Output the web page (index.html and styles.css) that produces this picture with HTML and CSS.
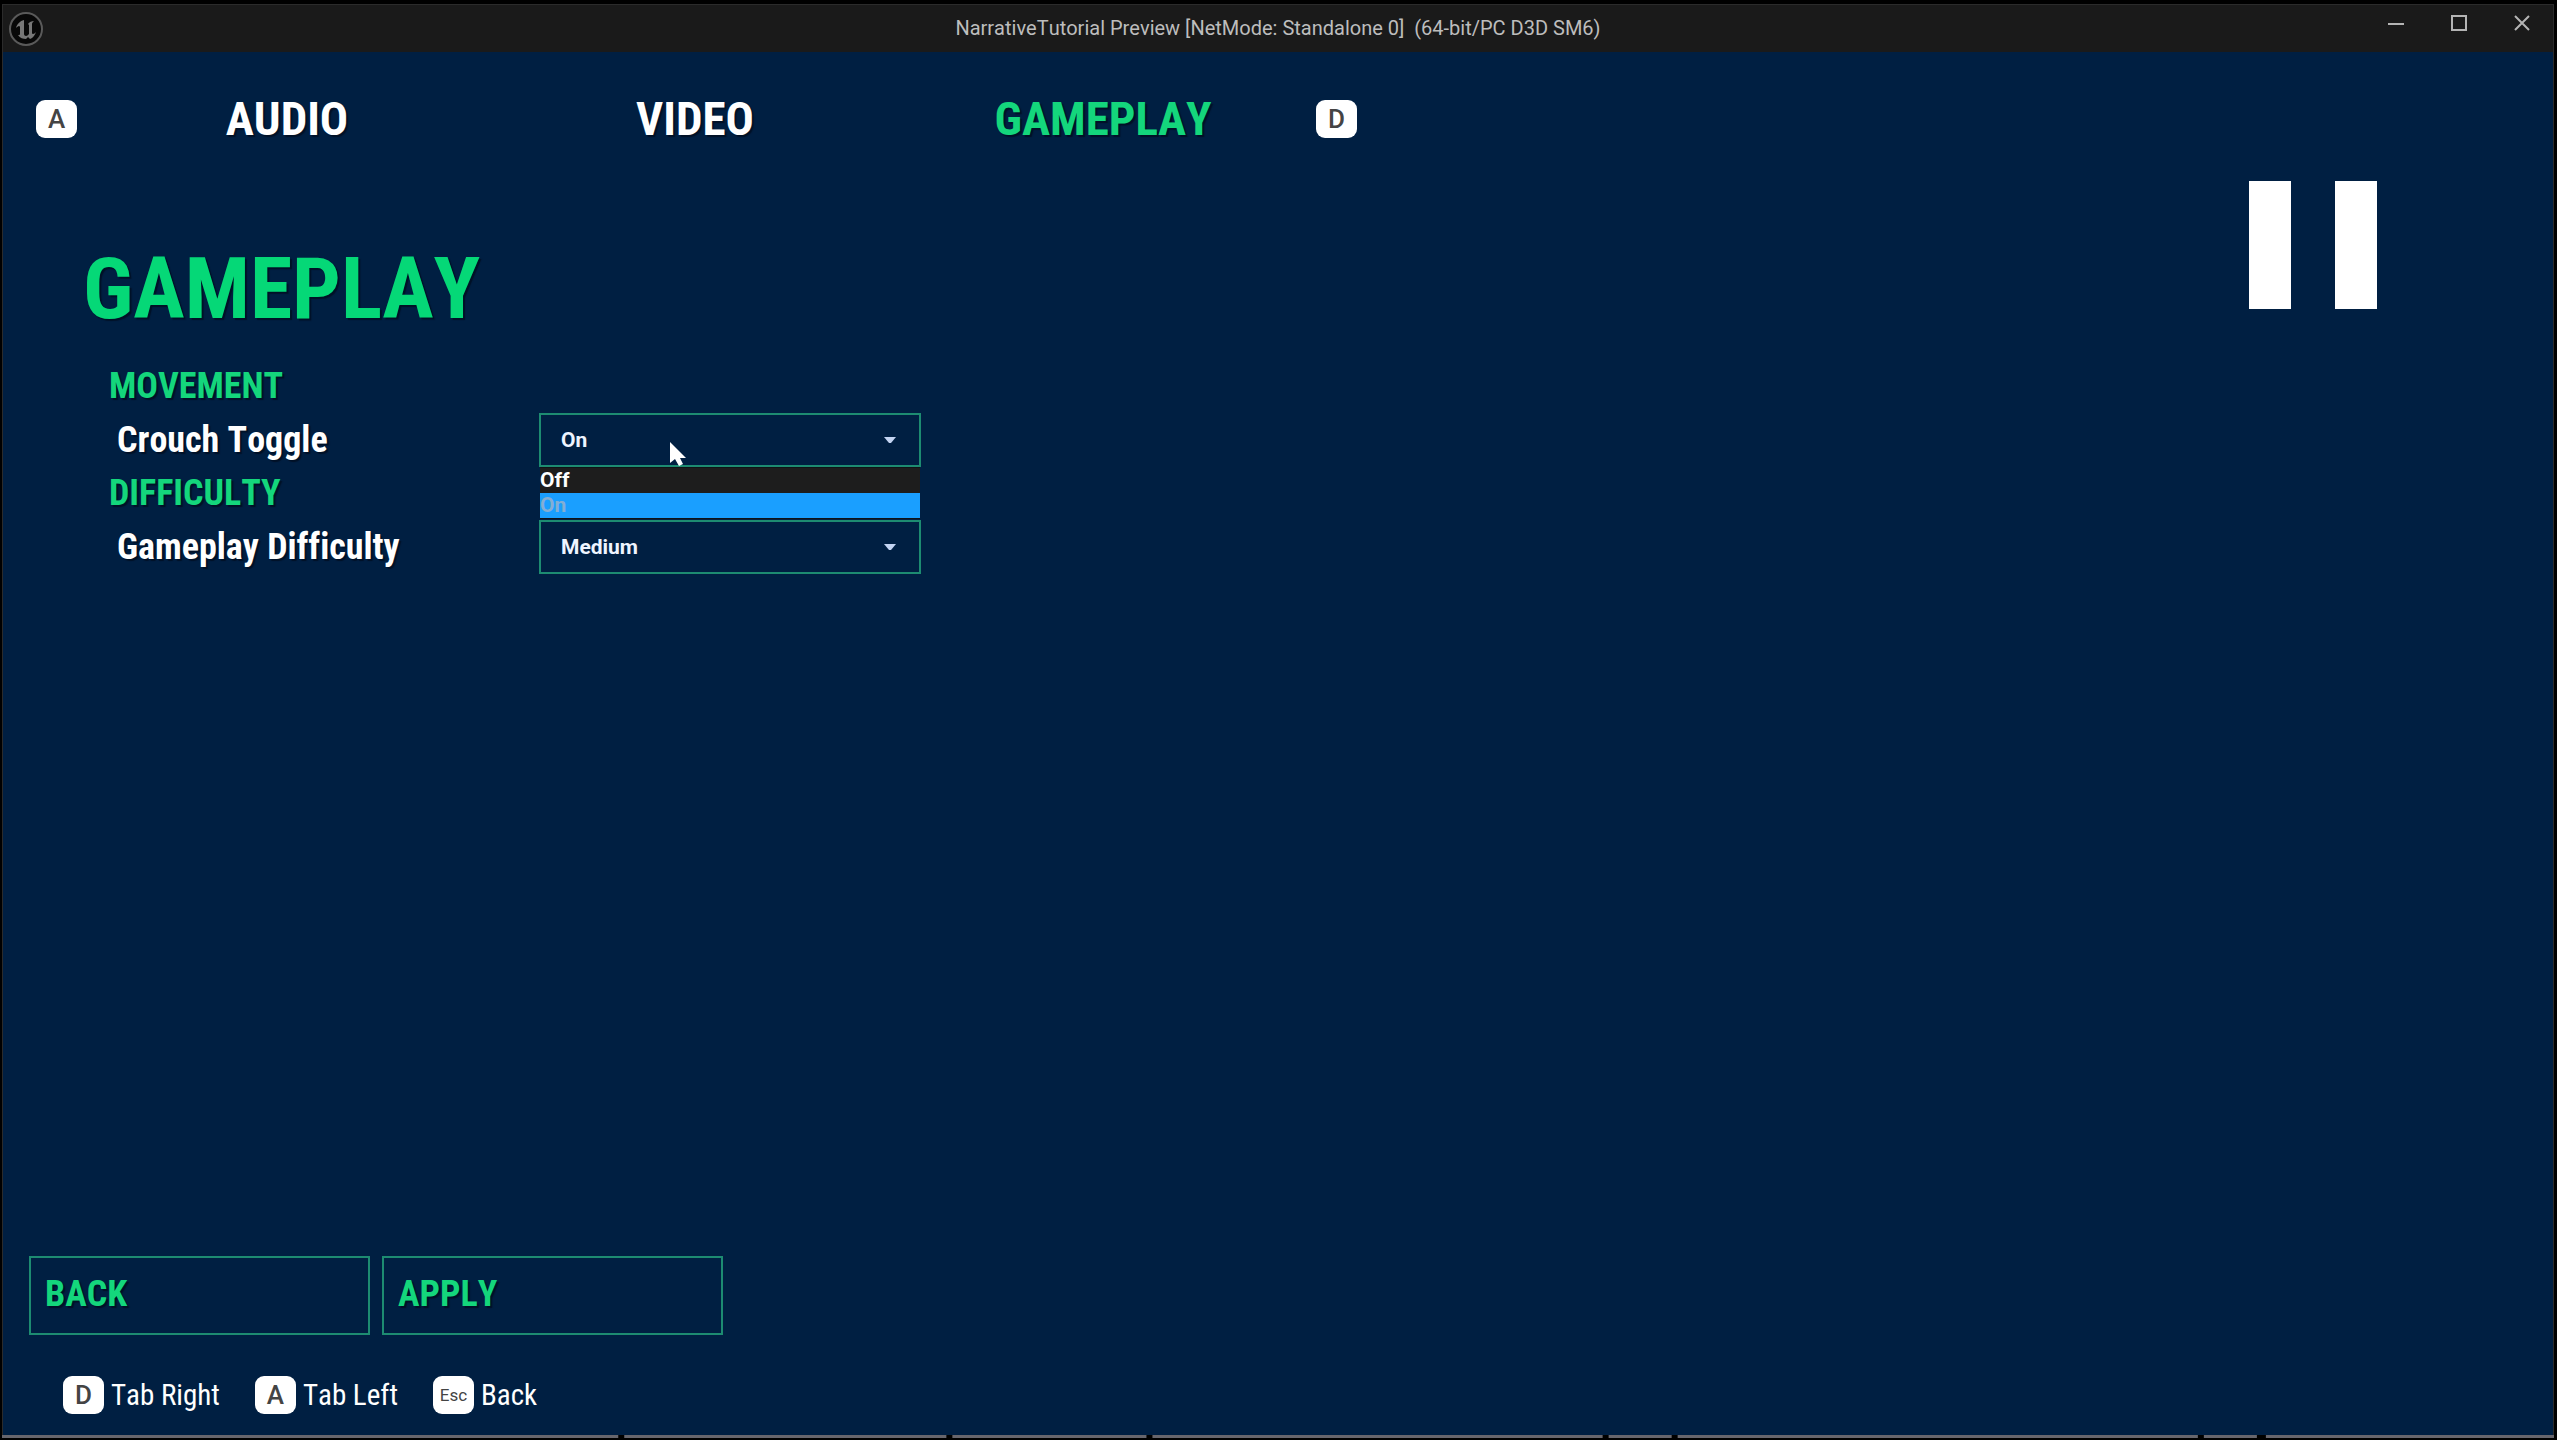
FILE: index.html
```html
<!DOCTYPE html>
<html lang="en">
<head>
<meta charset="utf-8">
<title>NarrativeTutorial Preview</title>
<link rel="stylesheet" href="styles.css">
</head>
<body>
<div class="window">
  <header class="titlebar">
    <svg class="logo" viewBox="0 0 36 36" aria-hidden="true">
      <circle cx="18" cy="18" r="16" fill="#080808" stroke="#5a5a5a" stroke-width="2"/>
      <path fill="#777" d="M16 9c-4 1-7 4-8 8 1-1 2-2 3-2 1 0 1 1 1 2v6c0 1-1 1-2 1 2 3 5 4 8 4l2-2 2 2c3-1 5-4 6-7-1 1-2 2-3 2-1 0-1-1-1-1v-9c0-1 1-2 2-3-2 0-5 1-6 3l1 1v9c-1 1-2 2-3 2s-2-1-2-2V11z"/>
    </svg>
    <div class="caption">NarrativeTutorial Preview [NetMode: Standalone 0]&nbsp; (64-bit/PC D3D SM6)</div>
    <div class="window-buttons">
      <button type="button" aria-label="Minimize"><svg viewBox="0 0 18 18"><path d="M1 10h16"/></svg></button>
      <button type="button" aria-label="Maximize"><svg viewBox="0 0 18 18"><path d="M2 2h14v14H2z"/></svg></button>
      <button type="button" aria-label="Close"><svg viewBox="0 0 18 18"><path d="M2 2l14 14M16 2L2 16"/></svg></button>
    </div>
  </header>

  <main class="screen">
    <nav class="tabs">
      <kbd class="key">A</kbd>
      <div class="tab-list">
        <button type="button" class="tab">AUDIO</button>
        <button type="button" class="tab">VIDEO</button>
        <button type="button" class="tab active">GAMEPLAY</button>
      </div>
      <kbd class="key">D</kbd>
      <svg class="pause" viewBox="0 0 128 128" aria-hidden="true"><path fill="#fff" d="M0 0h42v128H0zM86 0h42v128H86z"/></svg>
    </nav>

    <section class="settings">
      <h1>GAMEPLAY</h1>
      <h2>MOVEMENT</h2>
      <div class="setting">
        <label for="crouch">Crouch Toggle</label>
        <div class="dropdown">
          <select id="crouch"><option>Off</option><option selected>On</option></select>
          <svg class="arrow" viewBox="0 0 12 6" aria-hidden="true"><path d="M0 0h12L7 6H5z"/></svg>
          <ul class="options">
            <li>Off</li>
            <li class="selected">On</li>
          </ul>
          <svg class="cursor" viewBox="0 0 18 24" aria-hidden="true"><path fill="#fff" d="M1 0v21l5-4 4 7 4-2-3-6h6z"/></svg>
        </div>
      </div>
      <h2>DIFFICULTY</h2>
      <div class="setting">
        <label for="difficulty">Gameplay Difficulty</label>
        <div class="dropdown">
          <select id="difficulty"><option>Easy</option><option selected>Medium</option><option>Hard</option></select>
          <svg class="arrow" viewBox="0 0 12 6" aria-hidden="true"><path d="M0 0h12L7 6H5z"/></svg>
        </div>
      </div>
    </section>

    <footer class="footer">
      <div class="actions">
        <button type="button" class="action">BACK</button>
        <button type="button" class="action">APPLY</button>
      </div>
      <div class="hints">
        <span class="hint"><kbd class="key">D</kbd>Tab Right</span>
        <span class="hint"><kbd class="key">A</kbd>Tab Left</span>
        <span class="hint"><kbd class="key small">Esc</kbd>Back</span>
      </div>
    </footer>
  </main>

  <svg class="edge" viewBox="0 0 2551 3" preserveAspectRatio="none" aria-hidden="true">
    <path fill="#67666d" d="M0 0h616v3H0zM622 0h322v3H622zM950 0h194v3H950zM1150 0h450v3H1150zM1606 0h63v3H1606zM1675 0h520v3H1675zM2201 0h53v3H2201zM2263 0h288v3H2263z"/>
  </svg>
</div>
</body>
</html>
```

FILE: styles.css
```css
* {
  box-sizing: border-box;
}

body {
  margin: 0;
  background: #000;
  color: #fff;
  font-family: Roboto, "Liberation Sans", sans-serif;
  font-kerning: none;
  font-variant-ligatures: none;
}

button,
select,
kbd {
  font-family: inherit;
  font-kerning: inherit;
}

button {
  padding: 0;
  border: 0;
  background: none;
  color: inherit;
}

.window {
  display: flex;
  flex-direction: column;
  min-height: 100vh;
  padding: 4px 3px 2px 2px;
}

.titlebar {
  display: grid;
  grid-template-columns: 1fr auto 1fr;
  height: 48px;
  border: 1px solid #2b2b2b;
  border-bottom: 0;
  background: #1a1a1a;
}

.logo {
  width: 36px;
  height: 36px;
  margin: 6px 0 0 5px;
}

.caption {
  color: #bdbdbd;
  font-size: 20px;
  line-height: 46px;
}

.window-buttons {
  display: flex;
  justify-content: flex-end;
  align-items: flex-start;
  gap: 45px;
  padding: 9px 22px 0 0;
}

.window-buttons button,
.window-buttons svg {
  display: block;
  width: 18px;
  height: 18px;
}

.window-buttons path {
  fill: none;
  stroke: #b4b4b4;
  stroke-width: 2;
}

.screen {
  flex: 1;
  display: flex;
  flex-direction: column;
  border: solid #2b2b2b;
  border-width: 0 1px;
  background: #001f42;
  font-family: "Roboto Condensed", Roboto, sans-serif;
}

.tabs {
  display: flex;
  align-items: flex-start;
  padding: 48px 176px 0 33px;
}

.tab-list {
  display: grid;
  grid-template-columns: repeat(3, 408px);
  padding: 0 9px 0 6px;
}

.tab {
  font-size: 47px;
  font-weight: 700;
  line-height: 38px;
  text-shadow: 2px 2px 1px #001127;
}

.active,
h1,
h2,
.action {
  color: #14d67c;
}

.key {
  display: grid;
  place-items: center;
  width: 41px;
  height: 38px;
  border-radius: 9px;
  background: #fff;
  color: #444;
  font-family: Roboto, sans-serif;
  font-size: 26px;
  font-weight: 500;
  line-height: 38px;
}

.small {
  font-size: 17px;
  font-weight: 400;
}

.pause {
  width: 128px;
  height: 128px;
  margin: 81px 0 0 auto;
}

.settings {
  margin-top: -66px;
  padding-left: 80px;
}

h1,
h2 {
  margin: 0;
  font-weight: 700;
  text-shadow: 2px 2px 1px #001127;
}

h1 {
  color: #05d877;
  font-size: 86px;
  line-height: 92px;
}

h2 {
  padding-left: 26px;
  font-size: 36px;
  line-height: 53px;
}

h1 + h2 {
  margin-top: 25px;
}

.setting {
  display: flex;
  align-items: center;
  height: 54px;
  padding-left: 34px;
}

.setting label {
  width: 422px;
  font-size: 36px;
  font-weight: 700;
  text-shadow: 2px 2px 1px #001127;
}

.dropdown {
  position: relative;
  width: 382px;
  font-family: Roboto, sans-serif;
}

.dropdown select {
  display: block;
  width: 100%;
  height: 54px;
  padding: 0 20px;
  border: 2px solid #1d8b71;
  border-radius: 0;
  appearance: none;
  background: transparent;
  color: #eef4ff;
  font-size: 21px;
  font-weight: 700;
}

.arrow {
  position: absolute;
  top: 24px;
  right: 25px;
  width: 12px;
  height: 6px;
  fill: #c3d4f2;
}

.options {
  position: absolute;
  z-index: 1;
  top: 100%;
  left: 1px;
  right: 1px;
  margin: 0;
  padding: 1px 0;
  background: #101318;
  font-size: 21px;
  font-weight: 700;
  line-height: 25px;
  list-style: none;
}

.options li {
  background: #1d1d1d;
}

.options .selected {
  background: #1a9fff;
  color: #84aed4;
}

.cursor {
  position: absolute;
  top: 29px;
  left: 130px;
  width: 18px;
  height: 24px;
}

.footer {
  margin-top: auto;
  padding: 0 26px 21px;
}

.actions {
  display: flex;
  gap: 12px;
}

.action {
  width: 341px;
  height: 79px;
  padding: 0 14px 4px;
  border: 2px solid #1d8b71;
  font-size: 36px;
  font-weight: 700;
  text-align: left;
  text-shadow: 2px 2px 1px #001127;
}

.hints {
  display: flex;
  gap: 35px;
  padding: 41px 34px 0;
}

.hint {
  display: flex;
  align-items: center;
  gap: 7px;
  font-size: 29px;
  line-height: 38px;
}

.edge {
  display: block;
  width: 100%;
  height: 3px;
}
```
